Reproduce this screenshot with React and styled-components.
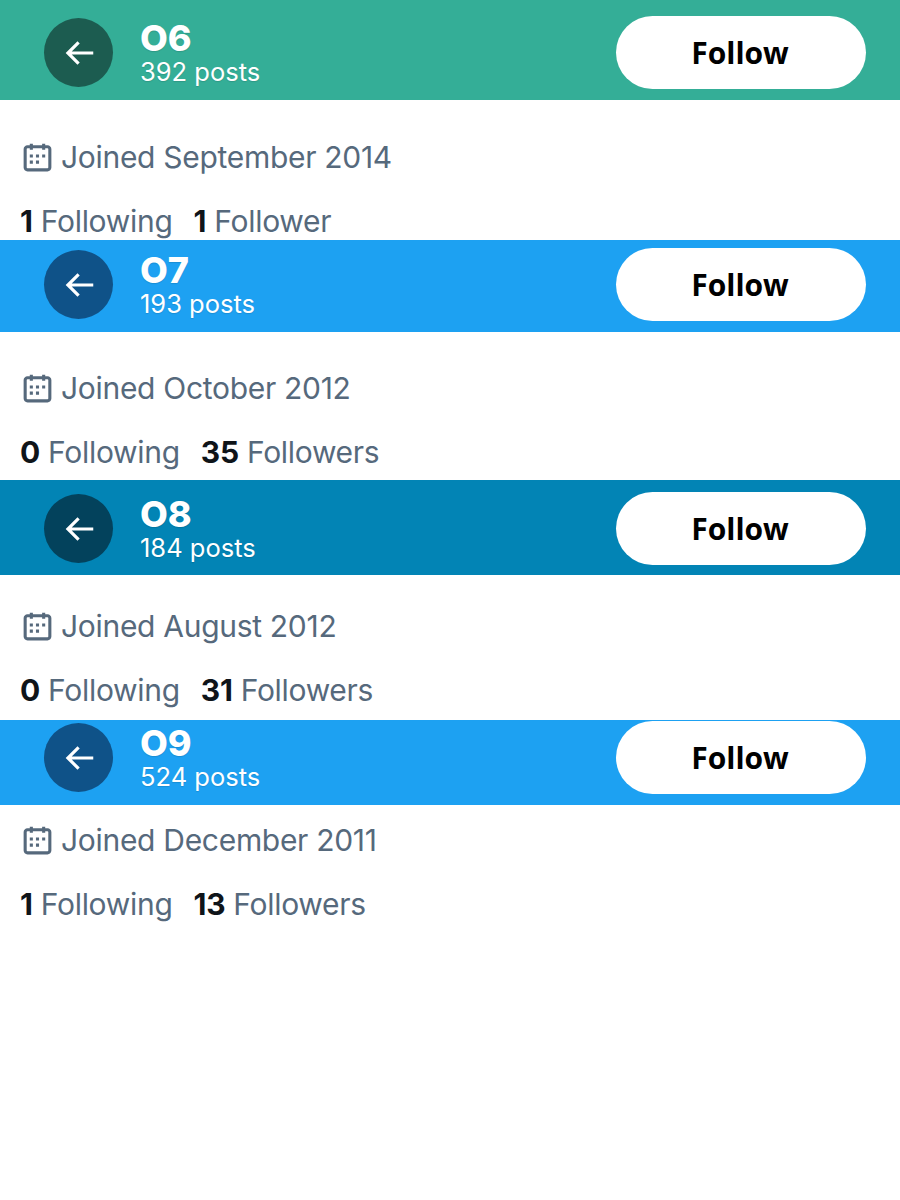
import styled, {createGlobalStyle} from "styled-components";

const GlobalStyle = createGlobalStyle`
  html, body {
    margin: 0;
    padding: 0;
    background: #ffffff;
  }

  body {
    font-family: "Inter", "Liberation Sans", sans-serif;
  }
`;

const Page = styled.div`
  width: 900px;
  height: 1200px;
  overflow: hidden;
  display: flex;
  flex-direction: column;
`;

const Section = styled.section`
  height: ${props => props.$height}px;
  box-sizing: border-box;
`;

const Bar = styled.header`
  height: ${props => props.$height}px;
  box-sizing: border-box;
  padding: ${props => props.$top}px 34px 0 44px;
  background: ${props => props.$color};
  display: flex;
  align-items: flex-start;
`;

const BarRow = styled.div`
  flex: 1;
  height: 73px;
  display: flex;
  align-items: center;
`;

const BackButton = styled.div`
  width: 69px;
  height: 69px;
  border-radius: 50%;
  background: ${props => props.$color};
  display: flex;
  align-items: center;
  justify-content: center;
  flex-shrink: 0;

  svg {
    width: 38px;
    height: 38px;
    fill: #ffffff;
  }
`;

const TitleBlock = styled.div`
  margin-left: 27px;
  margin-top: 2px;
  color: #ffffff;
`;

const Title = styled.div`
  font-size: 36px;
  font-weight: 800;
  line-height: 36px;
  text-shadow: 0 1px 1px rgba(0, 0, 0, 0.12);
`;

const Posts = styled.div`
  margin-top: 1px;
  font-size: 25.5px;
  font-weight: 400;
  line-height: 30px;
  text-shadow: 0 1px 1px rgba(0, 0, 0, 0.12);
`;

const FollowButton = styled.button`
  margin-left: auto;
  width: 250px;
  height: 73px;
  border: none;
  border-radius: 37px;
  background: #ffffff;
  color: #000000;
  font-family: "Open Sans", sans-serif;
  font-size: 30px;
  font-weight: 700;
  padding: 0 2px 0 0;
`;

const Details = styled.div`
  padding: ${props => props.$top}px 0 0 19px;
  display: flex;
  flex-direction: column;
  gap: 26px;
`;

const Joined = styled.div`
  height: 38px;
  display: flex;
  align-items: center;
  gap: 5px;
  font-size: 30px;
  letter-spacing: -0.3px;
  color: #56697c;

  svg {
    width: 37px;
    height: 37px;
    fill: #56697c;
  }
`;

const Stats = styled.div`
  height: 38px;
  margin-left: -1px;
  padding-left: 2px;
  display: flex;
  align-items: center;
  gap: 21px;
  font-size: 30px;
  letter-spacing: -0.3px;
  color: #56697c;
`;

const Stat = styled.span`
  b {
    color: #0f1419;
    font-weight: 700;
  }
`;

const ArrowIcon = () => (
  <svg viewBox="0 0 24 24">
    <path d="M7.414 13l5.043 5.04-1.414 1.42L3.586 12l7.457-7.46 1.414 1.42L7.414 11H21v2H7.414z"/>
  </svg>
);

const CalendarIcon = () => (
  <svg viewBox="0 0 24 24">
    <path d="M7 4V3h2v1h6V3h2v1h1.5C19.89 4 21 5.12 21 6.5v12c0 1.38-1.11 2.5-2.5 2.5h-13C4.12 21 3 19.88 3 18.5v-12C3 5.12 4.12 4 5.5 4H7zm0 2H5.5c-.27 0-.5.22-.5.5v12c0 .28.23.5.5.5h13c.28 0 .5-.22.5-.5v-12c0-.28-.22-.5-.5-.5H17v1h-2V6H9v1H7V6zm0 6h2v-2H7v2zm0 4h2v-2H7v2zm4-4h2v-2h-2v2zm0 4h2v-2h-2v2zm4-4h2v-2h-2v2z"/>
  </svg>
);

const profiles = [
  {name: 'O6', posts: '392 posts', joined: 'September 2014', following: 1, followers: 1, label: 'Follower', color: '#34ae97', dark: '#1c5c50', height: 240, barHeight: 100, barTop: 16, top: 38},
  {name: 'O7', posts: '193 posts', joined: 'October 2012', following: 0, followers: 35, label: 'Followers', color: '#1da1f2', dark: '#0f5288', height: 240, barHeight: 92, barTop: 8, top: 37},
  {name: 'O8', posts: '184 posts', joined: 'August 2012', following: 0, followers: 31, label: 'Followers', color: '#0284b5', dark: '#03425c', height: 240, barHeight: 95, barTop: 12, top: 32},
  {name: 'O9', posts: '524 posts', joined: 'December 2011', following: 1, followers: 13, label: 'Followers', color: '#1da1f2', dark: '#0f5288', height: 480, barHeight: 85, barTop: 1, top: 16},
];

export default function App() {
  return (
    <Page>
      <GlobalStyle/>
      {profiles.map(p => (
        <Section key={p.name} $height={p.height}>
          <Bar $height={p.barHeight} $top={p.barTop} $color={p.color}>
            <BarRow>
              <BackButton $color={p.dark}><ArrowIcon/></BackButton>
              <TitleBlock>
                <Title>{p.name}</Title>
                <Posts>{p.posts}</Posts>
              </TitleBlock>
              <FollowButton>Follow</FollowButton>
            </BarRow>
          </Bar>
          <Details $top={p.top}>
            <Joined><CalendarIcon/>Joined {p.joined}</Joined>
            <Stats>
              <Stat><b>{p.following}</b> Following</Stat>
              <Stat><b>{p.followers}</b> {p.label}</Stat>
            </Stats>
          </Details>
        </Section>
      ))}
    </Page>
  );
}
